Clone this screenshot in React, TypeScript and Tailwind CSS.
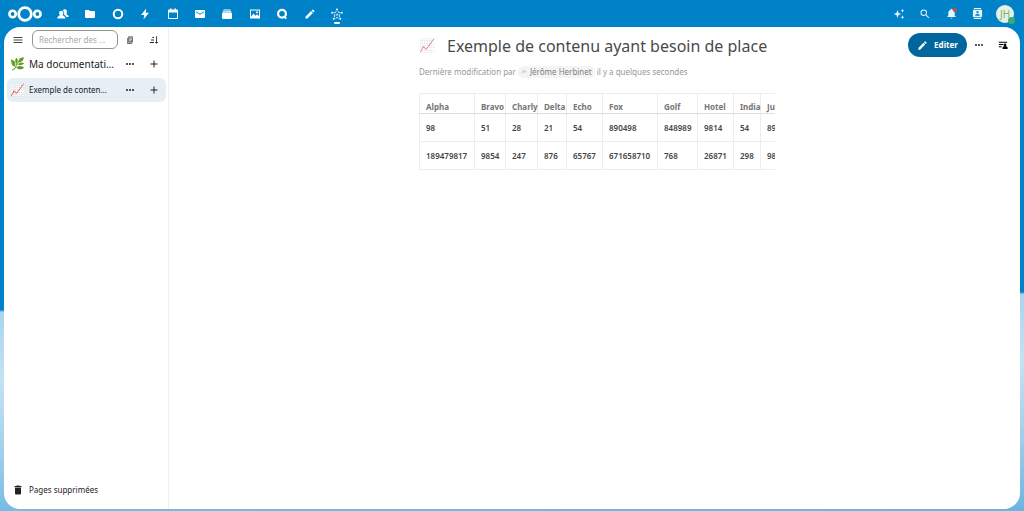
import type { ReactNode } from "react";

const paths = {
  menu: "M3,6H21V8H3V6M3,11H21V13H3V11M3,16H21V18H3V16Z",
  plus: "M19,13H13V19H11V13H5V11H11V5H13V11H19V13Z",
  dots: "M16,12A2,2 0 0,1 18,10A2,2 0 0,1 20,12A2,2 0 0,1 18,14A2,2 0 0,1 16,12M10,12A2,2 0 0,1 12,10A2,2 0 0,1 14,12A2,2 0 0,1 12,14A2,2 0 0,1 10,12M4,12A2,2 0 0,1 6,10A2,2 0 0,1 8,12A2,2 0 0,1 6,14A2,2 0 0,1 4,12Z",
  pencil:
    "M20.71,7.04C21.1,6.65 21.1,6 20.71,5.63L18.37,3.29C18,2.9 17.35,2.9 16.96,3.29L15.12,5.12L18.87,8.87M3,17.25V21H6.75L17.81,9.93L14.06,6.18L3,17.25Z",
  trash: "M19,4H15.5L14.5,3H9.5L8.5,4H5V6H19M6,19A2,2 0 0,0 8,21H16A2,2 0 0,0 18,19V7H6V19Z",
  search:
    "M9.5,3A6.5,6.5 0 0,1 16,9.5C16,11.11 15.41,12.59 14.44,13.73L14.71,14H15.5L20.5,19L19,20.5L14,15.5V14.71L13.73,14.44C12.59,15.41 11.11,16 9.5,16A6.5,6.5 0 0,1 3,9.5A6.5,6.5 0 0,1 9.5,3M9.5,5C7,5 5,7 5,9.5C5,12 7,14 9.5,14C12,14 14,12 14,9.5C14,7 12,5 9.5,5Z",
  folder: "M10,4H4C2.89,4 2,4.89 2,6V18A2,2 0 0,0 4,20H20A2,2 0 0,0 22,18V8C22,6.89 21.1,6 20,6H12L10,4Z",
  bolt: "M14.5,1L4,14H10.5L9,23L20,9.5H13.5L14.5,1Z",
  people:
    "M15.5,2.5A4.5,4.5 0 0,1 20,7C20,9.5 18.6,10.6 18.8,12C19,13.6 23.5,13.6 23.5,18H18.5C18.2,15 15,14.2 14,13C15,11 14.5,6.5 11.8,4.8C12.5,3.4 14,2.5 15.5,2.5M8.5,5.5A4.2,4.2 0 0,1 12.8,10C12.8,12 11.5,13.2 11.3,14C11.3,15.8 17,16 17,21H0.5C0.5,16 5.8,15.8 5.8,14C5.6,13.2 4.2,12 4.2,10A4.2,4.2 0 0,1 8.5,5.5Z",
  calendar:
    "M6,1H9V3H15V1H18V3H20A2,2 0 0,1 22,5V20A2,2 0 0,1 20,22H4A2,2 0 0,1 2,20V5A2,2 0 0,1 4,3H6V1M4,9V20H20V9H4Z",
  mail: "M4,4H20A2,2 0 0,1 22,6V18A2,2 0 0,1 20,20H4A2,2 0 0,1 2,18V6A2,2 0 0,1 4,4M4,6.5V8.5L12,13.5L20,8.5V6.5L12,11.5L4,6.5Z",
  image:
    "M2,3H22V21H2V3M4,5V17.5L9,11L13,15.5L16,12.5L20,16.5V5H4M16,6.5A2,2 0 1,1 16,10.5A2,2 0 0,1 16,6.5Z",
  bell: "M14,21A2,2 0 0,1 10,21H14M21,18.5V19.5H3V18.5L5,16.5V10.5C5,7.4 7,4.7 10,3.8A2,2 0 0,1 14,3.8C17,4.7 19,7.4 19,10.5V16.5L21,18.5Z",
  contacts:
    "M4,0H20V2H4V0M4,22H20V24H4V22M4,4H20A2,2 0 0,1 22,6V18A2,2 0 0,1 20,20H4A2,2 0 0,1 2,18V6A2,2 0 0,1 4,4M12,6.5A2.5,2.5 0 1,0 12,11.5A2.5,2.5 0 0,0 12,6.5M17,17V15.5C17,13.8 13.7,13 12,13C10.3,13 7,13.8 7,15.5V17H17Z",
  sparkles:
    "M9,4L11.2,9.8L17,12L11.2,14.2L9,20L6.8,14.2L1,12L6.8,9.8L9,4M19,1.5L20.2,4.3L23,5.5L20.2,6.7L19,9.5L17.8,6.7L15,5.5L17.8,4.3L19,1.5M19,14.5L20.2,17.3L23,18.5L20.2,19.7L19,22.5L17.8,19.7L15,18.5L17.8,17.3L19,14.5Z",
  sort: "M19,17H22L18,21L14,17H17V3H19V17M2,17H12V19H2V17M5,11H12V13H5V11M8,5H12V7H8V5Z",
  outline:
    "M2,4H22V6.5H2V4M2,9.5H13V12H2V9.5M2,15H9V17.5H2V15M17,8.5A3.2,3.2 0 1,1 17,14.9A3.2,3.2 0 0,1 17,8.5M17,15C20,15 23,16 23,18.5V21.5H11V18.5C11,16 14,15 17,15Z",
};

function Icon({ name, className = "size-3" }: { name: keyof typeof paths; className?: string }) {
  return (
    <svg viewBox="0 0 24 24" fill="currentColor" fillRule="evenodd" aria-hidden="true" className={className}>
      <path d={paths[name]} />
    </svg>
  );
}

function DeckIcon() {
  return (
    <svg viewBox="0 0 24 24" fill="currentColor" aria-hidden="true" className="size-3">
      <rect x="5" y="2" width="14" height="3" rx="1" opacity="0.5" />
      <rect x="3.5" y="5" width="17" height="4" rx="1" opacity="0.75" />
      <rect x="2" y="9" width="20" height="13" rx="2" />
    </svg>
  );
}

function PagesIcon() {
  return (
    <svg viewBox="0 0 24 24" fill="currentColor" aria-hidden="true" className="size-2">
      <path d="M3 6h2v15h13v2H5a2 2 0 0 1-2-2z" />
      <rect x="6" y="1" width="15" height="19" rx="2" opacity="0.7" />
      <path d="M9 5h9v1.6H9zM9 9h9v1.6H9zM9 13h6v1.6H9z" fill="#fff" />
    </svg>
  );
}

function StarIcon() {
  return (
    <svg viewBox="0 0 24 24" fill="none" stroke="currentColor" strokeWidth="1.7" aria-hidden="true" className="size-3">
      <path d="M10 6.5 8.8 9.3 5 9.6M14 6.5l1.2 2.8 3.8.3M5.5 12.5l2.1 1.8-1 4M18.5 12.5l-2.1 1.8 1 4M9 20.5l3-1.7 3 1.7" />
      <circle cx="12" cy="2.8" r="2" fill="currentColor" stroke="none" />
      <circle cx="2.2" cy="9.5" r="1.8" fill="currentColor" stroke="none" />
      <circle cx="21.8" cy="9.5" r="1.8" fill="currentColor" stroke="none" />
      <circle cx="5.5" cy="21.5" r="2" fill="currentColor" stroke="none" />
      <circle cx="18.5" cy="21.5" r="2" fill="currentColor" stroke="none" />
      <circle cx="12" cy="13.2" r="1.6" strokeWidth="1.3" />
    </svg>
  );
}

const apps: { label: string; icon: ReactNode }[] = [
  { label: "Contacts", icon: <Icon name="people" /> },
  { label: "Fichiers", icon: <Icon name="folder" /> },
  {
    label: "Cercles",
    icon: (
      <svg viewBox="0 0 24 24" fill="none" stroke="currentColor" strokeWidth="4" aria-hidden="true" className="size-3">
        <circle cx="12" cy="12" r="8.5" />
      </svg>
    ),
  },
  { label: "Activité", icon: <Icon name="bolt" /> },
  { label: "Agenda", icon: <Icon name="calendar" /> },
  { label: "Mail", icon: <Icon name="mail" /> },
  { label: "Deck", icon: <DeckIcon /> },
  { label: "Photos", icon: <Icon name="image" /> },
  {
    label: "Discussion",
    icon: (
      <svg viewBox="0 0 24 24" fill="none" stroke="currentColor" strokeWidth="4.4" aria-hidden="true" className="size-3">
        <circle cx="12" cy="11.5" r="7.8" />
        <path d="M16.5 17c1.2 2.2 2.6 3.4 4.5 4" strokeWidth="3.6" />
      </svg>
    ),
  },
  { label: "Notes", icon: <Icon name="pencil" /> },
  { label: "Collectives", icon: <StarIcon /> },
];

const columns: { title: string; width: string; values: [string, string] }[] = [
  { title: "Alpha", width: "w-[55px]", values: ["98", "189479817"] },
  { title: "Bravo", width: "w-[31px]", values: ["51", "9854"] },
  { title: "Charly", width: "w-[32px]", values: ["28", "247"] },
  { title: "Delta", width: "w-[29px]", values: ["21", "876"] },
  { title: "Echo", width: "w-[36px]", values: ["54", "65767"] },
  { title: "Fox", width: "w-[55px]", values: ["890498", "671658710"] },
  { title: "Golf", width: "w-[40px]", values: ["848989", "768"] },
  { title: "Hotel", width: "w-[36px]", values: ["9814", "26871"] },
  { title: "India", width: "w-[27px]", values: ["54", "298"] },
  { title: "Juliet", width: "w-[40px]", values: ["8974", "9841"] },
];

function TopBar() {
  return (
    <header className="flex h-[27px] items-center justify-between pr-[10px] pl-2 text-white">
      <div className="flex h-full items-center">
        <a href="#accueil" aria-label="Accueil" className="mr-[7px]">
          <svg viewBox="0 0 34 16" fill="none" stroke="currentColor" className="h-4 w-[34px]" aria-hidden="true">
            <circle cx="17" cy="8" r="6.3" strokeWidth="2.8" />
            <circle cx="4.6" cy="8" r="3.2" strokeWidth="2.6" />
            <circle cx="29.4" cy="8" r="3.2" strokeWidth="2.6" />
          </svg>
        </a>
        <nav className="grid h-full w-[302px] grid-cols-11">
          {apps.map((app, i) => (
            <a key={app.label} href="#app" aria-label={app.label} className="relative flex items-center justify-center">
              {app.icon}
              {i === apps.length - 1 && <span className="absolute bottom-[3px] h-[2px] w-[6px] rounded-full bg-white" />}
            </a>
          ))}
        </nav>
      </div>
      <div className="flex h-full items-center">
        <button aria-label="Assistant" className="flex w-[26px] justify-center text-white/90">
          <Icon name="sparkles" />
        </button>
        <button aria-label="Rechercher" className="flex w-[26px] justify-center text-white/90">
          <Icon name="search" />
        </button>
        <button aria-label="Notifications" className="flex w-[26px] justify-center text-white/90">
          <span className="relative">
            <Icon name="bell" className="size-[11px]" />
            <span className="absolute top-0 right-0 size-1 rounded-full bg-[#d9453d]" />
          </span>
        </button>
        <button aria-label="Contacts" className="flex w-[26px] justify-center text-white/90">
          <Icon name="contacts" className="size-[11px]" />
        </button>
        <button
          aria-label="Compte"
          className="relative ml-[6px] flex size-[18px] items-center justify-center rounded-full bg-[#e6f1e4] text-[10px] leading-none text-[#7cb07e]"
        >
          JH
          <span className="absolute -right-px -bottom-px size-[7px] rounded-full bg-[#3cab70]" />
        </button>
      </div>
    </header>
  );
}

function PageRow({ emoji, title, root = false }: { emoji: string; title: string; root?: boolean }) {
  return (
    <li
      className={
        root
          ? "grid h-6 grid-cols-[22px_minmax(0,1fr)_24px_24px] items-center"
          : "grid h-6 grid-cols-[22px_minmax(0,1fr)_24px_24px] items-center rounded-md bg-[#e5eff5]"
      }
    >
      <span className="flex justify-center text-[12px] leading-none">{emoji}</span>
      <a href="#page" className={root ? "truncate text-[10px] leading-4" : "truncate text-[8px] leading-4"}>
        {title}
      </a>
      <button aria-label={`Actions pour ${title}`} className="flex justify-center">
        <Icon name="dots" className="size-3" />
      </button>
      <button aria-label={`Ajouter une page à ${title}`} className="flex justify-center">
        <Icon name="plus" className="size-3" />
      </button>
    </li>
  );
}

function Sidebar() {
  return (
    <aside className="flex w-[165px] shrink-0 flex-col border-r border-[#f0f0f0] pr-[2px] pl-[3px]">
      <div className="mt-[3px] grid grid-cols-[22px_minmax(0,1fr)_24px_24px] items-center">
        <button aria-label="Menu" className="flex justify-center text-[#444]">
          <Icon name="menu" />
        </button>
        <input
          type="text"
          aria-label="Rechercher des pages"
          placeholder="Rechercher des …"
          className="ml-[3px] h-[19px] min-w-0 rounded-md border border-[#949494] pl-[6px] text-[8px] leading-4 outline-none placeholder:text-[#a8a8a8]"
        />
        <button aria-label="Filtrer" className="flex justify-center text-[#444]">
          <PagesIcon />
        </button>
        <button aria-label="Trier" className="flex justify-center">
          <Icon name="sort" className="size-[10px]" />
        </button>
      </div>
      <ul className="mt-[3px] flex flex-col gap-[2px]">
        <PageRow emoji="🌿" title="Ma documentati…" root />
        <PageRow emoji="📈" title="Exemple de conten…" />
      </ul>
      <button className="mt-auto mb-[7px] grid h-6 grid-cols-[22px_minmax(0,1fr)] items-center text-left text-[8px] leading-4">
        <span className="flex justify-center">
          <Icon name="trash" className="size-3" />
        </span>
        Pages supprimées
      </button>
    </aside>
  );
}

function Document() {
  return (
    <main className="grid min-w-0 flex-1 grid-cols-[minmax(0,1fr)_356px_minmax(0,1fr)] pt-[6px] pl-[5px]">
      <article className="col-start-2 min-w-0">
        <div className="flex h-6 items-center">
          <span className="w-7 text-[13px] leading-none opacity-70">📈</span>
          <h1 className="pt-px text-base leading-6 whitespace-nowrap text-[#4a4a4a]">Exemple de contenu ayant besoin de place</h1>
        </div>
        <p className="mt-[9px] flex items-center gap-[2px] text-[8px] leading-3 whitespace-nowrap text-[#979797]">
          Dernière modification par
          <span className="flex items-center gap-[2px] rounded-full bg-[#f4f4f4] pr-[3px] pl-[2px] text-[#808080]">
            <span className="flex size-2 items-center justify-center text-[4px] text-[#8fc79a]">JH</span>
            Jérôme Herbinet
          </span>
          il y a quelques secondes
        </p>
        <div className="mt-[15px] overflow-x-auto [scrollbar-width:none]">
          <table className="w-[381px] table-fixed border-collapse text-left text-[8px] leading-3 whitespace-nowrap">
            <thead>
              <tr className="h-5">
                {columns.map((c) => (
                  <th
                    key={c.title}
                    scope="col"
                    className={`${c.width} border border-[#ededed] border-b-[#dedede] p-0 pl-[6px] align-bottom font-bold text-[#757575]`}
                  >
                    {c.title}
                  </th>
                ))}
              </tr>
            </thead>
            <tbody>
              {[0, 1].map((row) => (
                <tr key={row} className="h-7">
                  {columns.map((c) => (
                    <td key={c.title} className="border border-[#ededed] p-0 pl-[6px] font-semibold text-[#444]">
                      {c.values[row]}
                    </td>
                  ))}
                </tr>
              ))}
            </tbody>
          </table>
        </div>
      </article>
      <div className="flex h-6 items-center justify-end pr-[5px] text-[#222]">
        <button className="flex h-6 w-[59px] items-center justify-center gap-[6px] rounded-full bg-[#00679e] text-[8px] leading-4 font-bold text-white">
          <Icon name="pencil" className="size-[11px]" />
          Editer
        </button>
        <button aria-label="Actions" className="flex w-6 justify-center">
          <Icon name="dots" className="size-3" />
        </button>
        <button aria-label="Ouvrir la barre latérale" className="flex w-6 justify-center text-black">
          <Icon name="outline" className="size-[10px]" />
        </button>
      </div>
    </main>
  );
}

export default function App() {
  return (
    <div className="flex min-h-screen flex-col bg-[linear-gradient(179deg,#0082c9_58.6%,#a9d5ee_59%,#c4e2f4_72%,#9fcfeb_86%,#6bb4e0_100%)] font-['Noto_Sans','Noto_Color_Emoji',sans-serif] text-[#222]">
      <TopBar />
      <div className="mr-1 mb-[2px] ml-1 flex flex-1 overflow-hidden rounded-2xl bg-white">
        <Sidebar />
        <Document />
      </div>
    </div>
  );
}
